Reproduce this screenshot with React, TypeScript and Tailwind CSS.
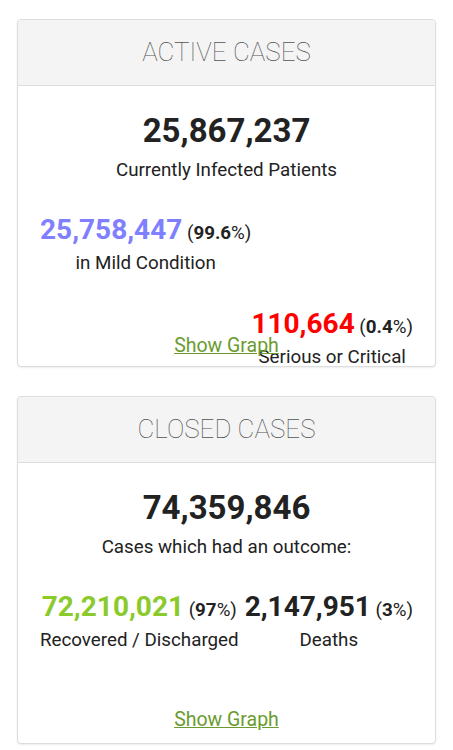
import React from "react";

function Pct({ v }: { v: string }) {
  return (
    <span className="text-[18.75px] leading-[20px] font-normal text-[#222]">
      {" "}(<span className="font-bold">{v}</span>%)
    </span>
  );
}

function Card({
  title,
  total,
  subtitle,
  children,
}: {
  title: string;
  total: string;
  subtitle: string;
  children: React.ReactNode;
}) {
  return (
    <div className="rounded-[4px] border border-[#dddddd] bg-white shadow-[0_1px_2px_rgba(0,0,0,0.08)]">
      <div className="h-[66px] rounded-t-[4px] border-b border-[#dddddd] bg-[#f4f4f4] text-center text-[26px] font-thin leading-[65px] text-[#555555]">
        {title}
      </div>
      <div className="grid h-[280px]">
        <div className="col-start-1 row-start-1 flex flex-col px-[22px] pt-[25px]">
          <div className="text-center text-[33px] font-bold leading-[40px] text-[#222]">{total}</div>
          <div className="mt-[7px] text-center text-[18.75px] leading-[24px] text-[#222]">{subtitle}</div>
          {children}
        </div>
        <div className="col-start-1 row-start-1 self-end justify-self-center pb-[10px]">
          <a className="text-[19.5px] leading-[24px] text-[#6b9b2e] underline">Show Graph</a>
        </div>
      </div>
    </div>
  );
}

function Stat({ n, color, pct, label }: { n: string; color: string; pct: string; label: string }) {
  return (
    <div className="text-center">
      <div className="whitespace-nowrap text-[28px] font-bold leading-[34px]" style={{ color }}>
        {n}
        <Pct v={pct} />
      </div>
      <div className="mt-[4px] text-[18.75px] leading-[24px] text-[#222]">{label}</div>
    </div>
  );
}

export default function App() {
  return (
    <div className="min-h-[750px] bg-white px-[17px] pt-[19px]" style={{ fontFamily: "Roboto, 'Liberation Sans', sans-serif" }}>
      <Card title="ACTIVE CASES" total="25,867,237" subtitle="Currently Infected Patients">
        <div className="mt-[31px] self-start">
          <Stat n="25,758,447" color="#8080ff" pct="99.6" label="in Mild Condition" />
        </div>
        <div className="mt-[32px] self-end">
          <Stat n="110,664" color="#ff0000" pct="0.4" label="Serious or Critical" />
        </div>
      </Card>
      <div className="mt-[29px]">
        <Card title="CLOSED CASES" total="74,359,846" subtitle="Cases which had an outcome:">
          <div className="mt-[31px] flex justify-between">
            <Stat n="72,210,021" color="#8aca2b" pct="97" label="Recovered / Discharged" />
            <Stat n="2,147,951" color="#222222" pct="3" label="Deaths" />
          </div>
        </Card>
      </div>
    </div>
  );
}
